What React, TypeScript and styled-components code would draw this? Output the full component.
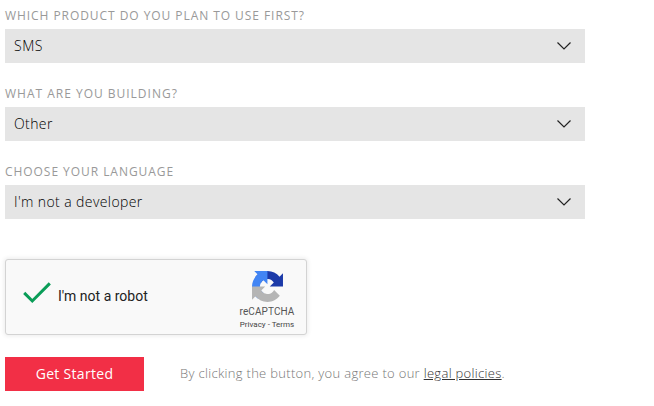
import React from "react";
import styled, { createGlobalStyle } from "styled-components";

const GlobalStyle = createGlobalStyle`
  * { box-sizing: border-box; }
  body { margin: 0; background: #fff; font-family: "Open Sans", "Noto Sans", sans-serif; }
`;

const Form = styled.form`
  width: 654px;
  height: 406px;
  overflow: hidden;
  padding: 8px 0 0 5px;
`;

const Field = styled.div`
  width: 580px;
  height: 78px;
`;

const Label = styled.div<{ $spacing: number }>`
  height: 21px;
  font-size: 12px;
  line-height: 16px;
  font-weight: 400;
  letter-spacing: ${(p) => p.$spacing}px;
  color: #999;
  text-transform: uppercase;
  white-space: nowrap;
`;

const SelectBox = styled.div<{ $spacing: number }>`
  display: flex;
  align-items: center;
  justify-content: space-between;
  height: 34px;
  padding: 0 13px 0 9px;
  background: #e5e5e5;
  color: #000;
  font-size: 14px;
  font-weight: 300;
  letter-spacing: ${(p) => p.$spacing}px;
`;

const Value = styled.span`
  padding-bottom: 1px;
`;

const Captcha = styled.div`
  display: flex;
  align-items: center;
  width: 302px;
  height: 76px;
  margin-top: 17px;
  padding-left: 17px;
  border: 1px solid #d3d3d3;
  border-radius: 3px;
  background: #f9f9f9;
  box-shadow: 0 0 4px 1px rgba(0, 0, 0, 0.08);
  font-family: Roboto, sans-serif;
`;

const CaptchaText = styled.span`
  flex: 1;
  margin: -2px 0 0 7px;
  font-size: 14px;
  line-height: 17px;
  color: #222;
`;

const Brand = styled.div`
  display: flex;
  flex-direction: column;
  align-items: center;
  align-self: flex-start;
  width: 56px;
  margin: 11px 11px 0 0;
  color: #555;
  white-space: nowrap;
`;

const BrandName = styled.span`
  margin-top: 4px;
  font-size: 10px;
  line-height: 12px;
  letter-spacing: 0.1px;
`;

const BrandLinks = styled.span`
  margin-top: 2px;
  font-size: 8px;
  line-height: 10px;
  color: #444;
`;

const Actions = styled.div`
  display: flex;
  align-items: center;
  gap: 36px;
  margin-top: 22px;
`;

const Submit = styled.button`
  width: 139px;
  height: 34px;
  padding: 0 0 1px;
  border: 0;
  background: #f22f46;
  color: #fff;
  font: 400 14px "Open Sans", sans-serif;
  letter-spacing: 0.3px;
`;

const Legal = styled.span`
  padding-bottom: 2px;
  font-size: 13px;
  font-weight: 300;
  letter-spacing: 0.31px;
  color: #777;
  white-space: nowrap;
`;

const LegalLink = styled.a`
  color: #333;
  text-decoration: underline;
`;

const fields = [
  { label: "Which product do you plan to use first?", value: "SMS", labelSpacing: 0.94, valueSpacing: 0.5 },
  { label: "What are you building?", value: "Other", labelSpacing: 0.99, valueSpacing: 0.4 },
  { label: "Choose your language", value: "I'm not a developer", labelSpacing: 0.95, valueSpacing: 0.4 },
];

const Chevron = () => (
  <svg width="16" height="10" viewBox="0 0 16 10" fill="none" stroke="#222" strokeWidth="1.2">
    <path d="M1.5 1.5 8 8l6.5-6.5" />
  </svg>
);

const CheckMark = styled.svg`
  margin-top: -8px;
`;

const Check = () => (
  <CheckMark width="28" height="22" viewBox="0 0 28 22" fill="none" stroke="#0a9d58" strokeWidth="3">
    <path d="M1.2 10.9 9.3 19 26.8 1.4" />
  </CheckMark>
);

const RecaptchaLogo = () => (
  <svg width="31" height="31" viewBox="0 0 64 64">
    <path fill="#1c3aa9" d="M64 31.955l-.033-1.37V4.687l-7.16 7.16C50.948 4.674 42.033.093 32.05.093c-10.4 0-19.622 4.96-25.458 12.64l11.736 11.86a15.55 15.55 0 0 1 4.754-5.334c2.05-1.6 4.952-2.906 8.968-2.906.485 0 .86.057 1.135.163 4.976.393 9.288 3.14 11.828 7.124l-8.307 8.307L64 31.953" />
    <path fill="#4285f4" d="M31.862.094l-1.37.033H4.594l7.16 7.16C4.58 13.147 0 22.06 0 32.046c0 10.4 4.96 19.622 12.64 25.458L24.5 45.768a15.55 15.55 0 0 1-5.334-4.754c-1.6-2.05-2.906-4.952-2.906-8.968 0-.485.057-.86.163-1.135.393-4.976 3.14-9.288 7.124-11.828l8.307 8.307L31.86.095" />
    <path fill="#b5b5b5" d="M.001 32.045l.033 1.37v25.898l7.16-7.16c5.86 7.173 14.774 11.754 24.76 11.754 10.4 0 19.622-4.96 25.458-12.64l-11.736-11.86a15.55 15.55 0 0 1-4.754 5.334c-2.05 1.6-4.952 2.906-8.968 2.906-.485 0-.86-.057-1.135-.163-4.976-.393-9.288-3.14-11.828-7.124l8.307-8.307c-10.522.04-22.4.066-27.295-.005" />
  </svg>
);

export default function App() {
  return (
    <>
      <GlobalStyle />
      <Form>
        {fields.map((f) => (
          <Field key={f.label}>
            <Label $spacing={f.labelSpacing}>{f.label}</Label>
            <SelectBox $spacing={f.valueSpacing}>
              <Value>{f.value}</Value>
              <Chevron />
            </SelectBox>
          </Field>
        ))}
        <Captcha>
          <Check />
          <CaptchaText>I'm not a robot</CaptchaText>
          <Brand>
            <RecaptchaLogo />
            <BrandName>reCAPTCHA</BrandName>
            <BrandLinks>Privacy - Terms</BrandLinks>
          </Brand>
        </Captcha>
        <Actions>
          <Submit type="button">Get Started</Submit>
          <Legal>
            By clicking the button, you agree to our <LegalLink>legal policies</LegalLink>.
          </Legal>
        </Actions>
      </Form>
    </>
  );
}
